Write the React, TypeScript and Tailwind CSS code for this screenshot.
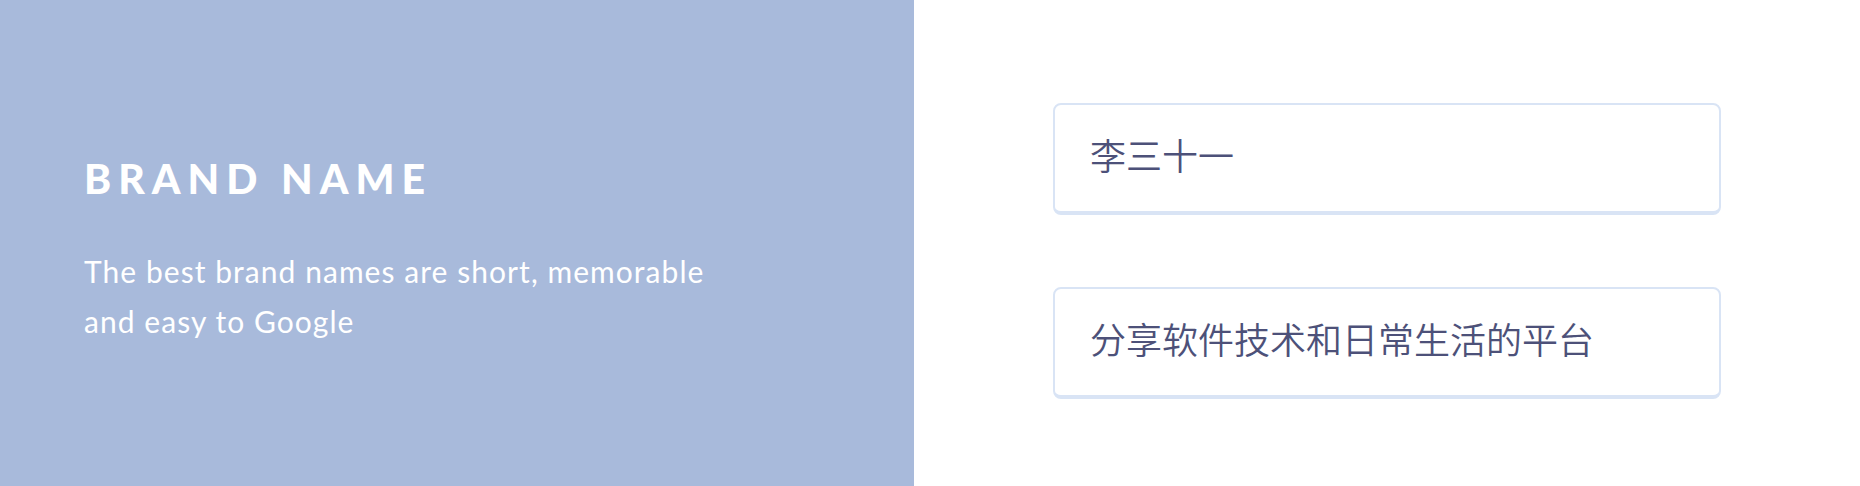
import React from 'react';

const cards = ['李三十一', '分享软件技术和日常生活的平台'];

const App = () => {
  return (
    <div className="flex w-[1860px] h-[486px] bg-white">
      {/* ---left panel--- */}
      <div className="w-[914px] h-full bg-[#a8badb] pl-[84px] pt-[159px] text-white font-['Lato',sans-serif]">
        <h1 className="text-[41px] leading-[40px] font-black tracking-[0.17em]">BRAND NAME</h1>
        <p className="mt-[47px] text-[30px] leading-[50px] font-normal tracking-[0.035em] w-[660px]">
          The best brand names are short, memorable and easy to Google
        </p>
      </div>

      {/* ---right panel--- */}
      <div className="flex-1 h-full pt-[103px]">
        <div className="w-[668px] mx-auto flex flex-col gap-[72px]">
          {cards.map((text) => (
            <div
              key={text}
              className="h-[112px] flex items-center border-2 border-b-4 border-[#d9e4f5] rounded-lg bg-white pl-[35px] pb-2"
            >
              <span className="text-[36px] font-[350] text-[#4d5179] font-['Noto_Sans_CJK_SC','Noto_Sans',sans-serif]">
                {text}
              </span>
            </div>
          ))}
        </div>
      </div>
    </div>
  );
};

export default App;
